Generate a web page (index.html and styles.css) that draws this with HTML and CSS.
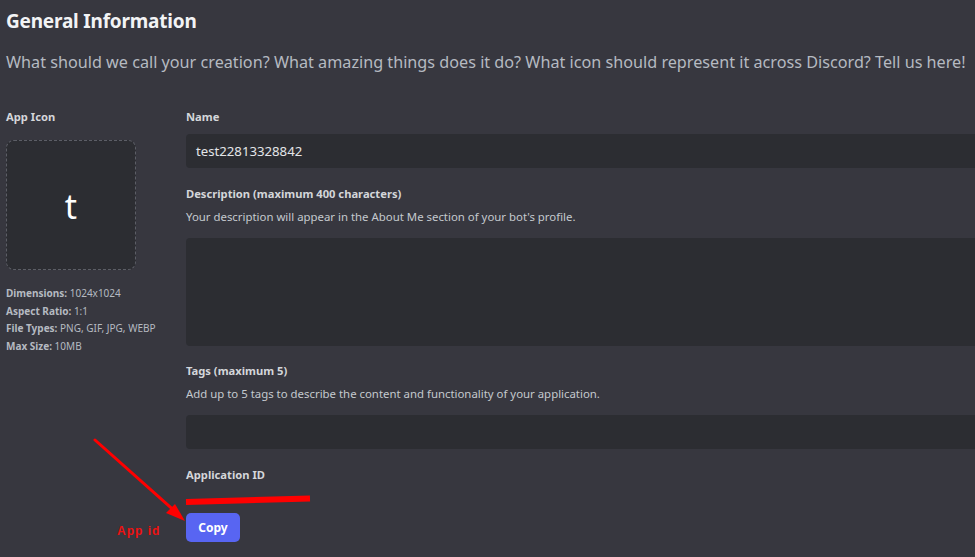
FILE: index.html
```html
<!DOCTYPE html>
<html lang="en">
<head>
<meta charset="utf-8">
<title>General Information</title>
<link rel="stylesheet" href="styles.css">
</head>
<body>
<div class="page">
  <h1 class="title">General Information</h1>
  <p class="subtitle">What should we call your creation? What amazing things does it do? What icon should represent it across Discord? Tell us here!</p>
  <div class="columns">
    <div class="left">
      <div class="label">App Icon</div>
      <div class="icon-box"><span class="icon-letter">t</span></div>
      <div class="info">
        <div><b>Dimensions:</b> 1024x1024</div>
        <div><b>Aspect Ratio:</b> 1:1</div>
        <div><b>File Types:</b> PNG, GIF, JPG, WEBP</div>
        <div><b>Max Size:</b> 10MB</div>
      </div>
    </div>
    <div class="right">
      <div class="label">Name</div>
      <div class="input name-input">test22813328842</div>
      <div class="label gap-top">Description (maximum 400 characters)</div>
      <div class="help">Your description will appear in the About Me section of your bot's profile.</div>
      <div class="input textarea"></div>
      <div class="label gap-top2">Tags (maximum 5)</div>
      <div class="help">Add up to 5 tags to describe the content and functionality of your application.</div>
      <div class="input tags-input"></div>
      <div class="label gap-top">Application ID</div>
      <div class="app-id"></div>
      <button class="copy-btn">Copy</button>
    </div>
  </div>
</div>
<svg class="annot" width="975" height="557" viewBox="0 0 975 557">
  <line x1="95" y1="440" x2="178" y2="514" stroke="#ff0000" stroke-width="3" stroke-linecap="round"/>
  <polygon points="185,521 166,513 175,504" fill="#ff0000"/>
  <path d="M186 502 L310 498.5" stroke="#ff0000" stroke-width="6"/>
  <text x="117" y="535" class="annot-text">App id</text>
</svg>
</body>
</html>
```

FILE: styles.css
```css
html, body {
  margin: 0;
  padding: 0;
  background: #37373f;
  overflow: hidden;
  width: 975px;
  height: 557px;
}
body {
  font-family: "Noto Sans", "Open Sans", sans-serif;
  color: #dbdee1;
  position: relative;
}
.page {
  padding: 7px 0 0 6px;
}
.title {
  margin: 0;
  font-size: 19px;
  line-height: 28px;
  font-weight: 700;
  color: #f2f3f5;
  letter-spacing: -0.2px;
}
.subtitle {
  margin: 15px 0 0;
  font-size: 16.2px;
  line-height: 24px;
  color: #b5bac1;
  white-space: nowrap;
}
.columns {
  display: flex;
  margin-top: 35px;
}
.left {
  width: 180px;
  flex: none;
}
.right {
  width: 820px;
  flex: none;
  display: flex;
  flex-direction: column;
  align-items: flex-start;
}
.label {
  font-size: 11.2px;
  line-height: 16px;
  font-weight: 700;
  color: #d4d6da;
}
.icon-box {
  margin-top: 15px;
  width: 130px;
  height: 130px;
  box-sizing: border-box;
  border: 1px dashed #5c5e66;
  border-radius: 8px;
  background: #2c2d32;
  display: flex;
  align-items: center;
  justify-content: center;
}
.icon-letter {
  font-size: 34px;
  color: #ffffff;
  line-height: 1;
  margin-top: 1px;
}
.info {
  margin-top: 15px;
  font-size: 10px;
  line-height: 17.5px;
  color: #b5bac1;
}
.info b {
  font-weight: 700;
}
.input {
  background: #2c2d32;
  border-radius: 4px;
  width: 820px;
  box-sizing: border-box;
}
.name-input {
  margin-top: 9px;
  height: 34px;
  padding: 0 10px;
  font-size: 13.2px;
  line-height: 34px;
  color: #e3e5e8;
}
.gap-top {
  margin-top: 18px;
}
.gap-top2 {
  margin-top: 17px;
}
.help {
  margin-top: 7px;
  font-size: 11.4px;
  line-height: 16px;
  color: #c4c9ce;
}
.textarea {
  margin-top: 13px;
  height: 108px;
}
.tags-input {
  margin-top: 13px;
  height: 34px;
}
.app-id {
  margin-top: 6px;
  height: 16px;
}
.copy-btn {
  margin-top: 8px;
  width: 54px;
  height: 29px;
  border: none;
  border-radius: 5px;
  background: #5865f2;
  color: #ffffff;
  font-family: "Noto Sans", "Open Sans", sans-serif;
  font-size: 12px;
  font-weight: 700;
  padding: 0;
}
.annot {
  position: absolute;
  left: 0;
  top: 0;
  pointer-events: none;
}
.annot-text {
  font-family: "Liberation Sans", sans-serif;
  font-size: 12px;
  font-weight: 700;
  letter-spacing: 1px;
  fill: #ee1111;
}
```
